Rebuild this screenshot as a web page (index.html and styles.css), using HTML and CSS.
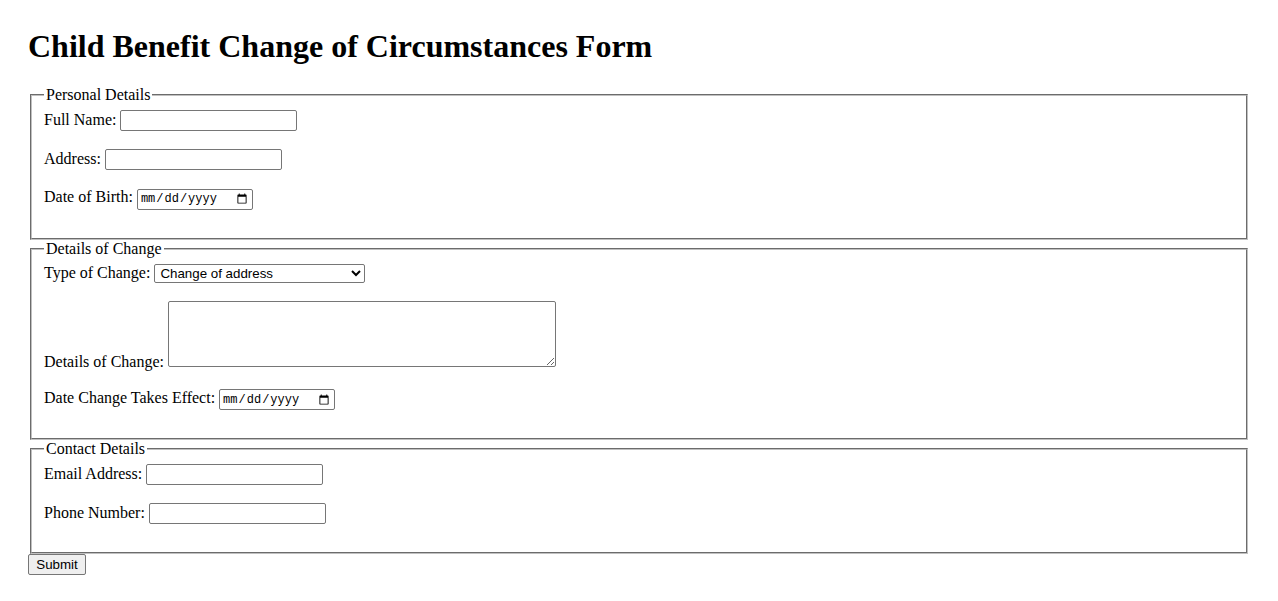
FILE: index.html
```html
<!DOCTYPE html>
<html lang="en">
<head>
    <meta charset="UTF-8">
    <meta name="viewport" content="width=device-width, initial-scale=1.0">
    <title>Child Benefit Change of Circumstances Form</title>
    <link rel="stylesheet" href="styles.css">
</head>
<body>
    <h1>Child Benefit Change of Circumstances Form</h1>
    <form id="change-form">
        <fieldset>
            <legend>Personal Details</legend>
            <label for="full-name">Full Name:</label>
            <input type="text" id="full-name" name="full-name"><br><br>
            <label for="address">Address:</label>
            <input type="text" id="address" name="address"><br><br>
            <label for="dob">Date of Birth:</label>
            <input type="date" id="dob" name="dob"><br><br>
        </fieldset>

        <fieldset>
            <legend>Details of Change</legend>
            <label for="change-type">Type of Change:</label>
            <select id="change-type" name="change-type">
                <option value="address">Change of address</option>
                <option value="income">Change of income</option>
                <option value="child">Change in child's circumstances</option>
            </select><br><br>
            <label for="change-details">Details of Change:</label>
            <textarea id="change-details" name="change-details"></textarea><br><br>
            <label for="effective-date">Date Change Takes Effect:</label>
            <input type="date" id="effective-date" name="effective-date"><br><br>
        </fieldset>

        <fieldset>
            <legend>Contact Details</legend>
            <label for="email">Email Address:</label>
            <input type="email" id="email" name="email"><br><br>
            <label for="phone">Phone Number:</label>
            <input type="tel" id="phone" name="phone"><br><br>
        </fieldset>

        <button type="submit">Submit</button>
    </form>
</body>
</html>
```

FILE: styles.css
```css
body {
    margin: 28px;
    font-family: "Liberation Serif", "Times New Roman", serif;
    font-size: 16px;
    color: #000;
    background-color: #fff;
}

h1 {
    font-size: 32px;
    margin: 0 0 21px;
}

fieldset {
    margin: 0 2px;
    padding: 6px 12px 10px;
    border: 2px groove #c0c0c0;
}

legend {
    padding: 0 2px;
}

input,
select,
textarea,
button {
    font-family: "Liberation Sans", Arial, sans-serif;
    font-size: 13.33px;
    box-sizing: border-box;
    border: 1px solid #767676;
    border-radius: 2px;
    background-color: #fff;
    color: #000;
}

input[type="text"],
input[type="email"],
input[type="tel"] {
    width: 177px;
    height: 21px;
    padding: 1px 2px;
}

input[type="date"] {
    width: 116px;
    height: 21px;
    padding: 1px 2px;
    font-family: "Liberation Mono", "Courier New", monospace;
    font-size: 12px;
}

select {
    width: 211px;
    height: 19px;
    padding: 0 1px;
}

textarea {
    width: 388px;
    height: 66px;
    padding: 2px;
    font-family: "Liberation Mono", monospace;
}

button {
    width: 58px;
    height: 21px;
    padding: 1px 6px;
    background-color: #efefef;
    font-size: 13.33px;
}
```
